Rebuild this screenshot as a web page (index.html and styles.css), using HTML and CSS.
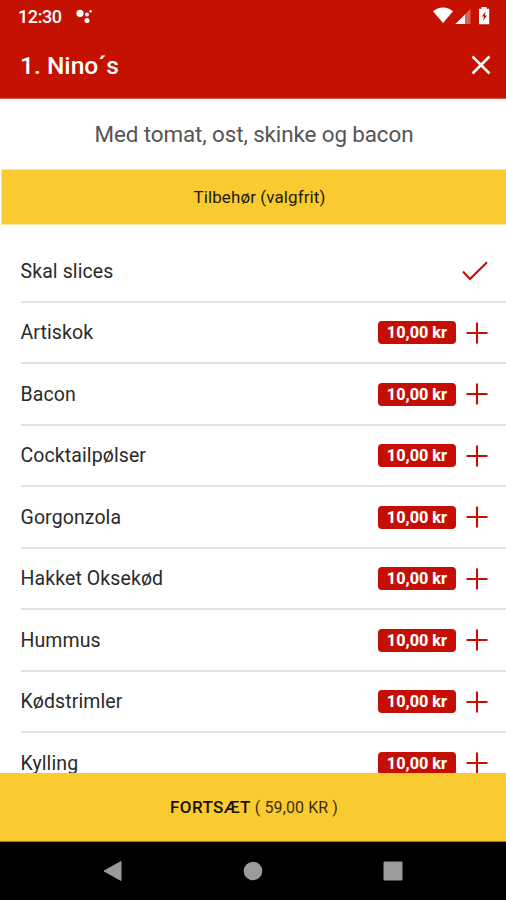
FILE: index.html
```
<!DOCTYPE html>
<html lang="da">
<head>
<meta charset="utf-8">
<title>1. Nino´s</title>
<link rel="stylesheet" href="styles.css">
</head>
<body>
<svg class="defs" aria-hidden="true">
  <symbol id="plus" viewBox="0 0 22 22"><path d="M11 .5v21M.5 11h21" fill="none" stroke="#c50f05" stroke-width="2.1"/></symbol>
</svg>
<div class="app">
  <header class="header">
    <div class="status">
      <span class="clock">12:30</span>
      <svg class="assistant" width="17" height="15" viewBox="0 0 17 15" fill="#fff"><circle cx="4" cy="4.3" r="3.6"/><circle cx="11" cy="5.6" r="2"/><circle cx="14.6" cy="2.2" r="1.2"/><circle cx="11" cy="11.5" r="2.5"/></svg>
      <svg class="system" width="58" height="18" viewBox="0 0 58 18">
        <path d="M0 4.3C5.8-.8 14.2-.8 20 4.3L10 16z" fill="#fff"/>
        <path d="M22.5 17L37.500 2v15z" fill="#fff" opacity=".35"/>
        <path d="M22.5 17L32 7.500V17z" fill="#fff"/>
        <path d="M48.5 0h5v1.800h2.700V17.300H46V1.800h2.500z" fill="#fff"/>
        <path d="M52.8 4.500l-4 5h2.300l-1 4.300 4-5.300h-2.300z" fill="#c50f05"/>
      </svg>
    </div>
    <div class="titlebar">
      <h1 class="title">1. Nino´s</h1>
      <svg width="20" height="20" viewBox="0 0 20 20"><path d="M1.5 1.500l17 17M18.500 1.500l-17 17" stroke="#fff" stroke-width="2.5" fill="none"/></svg>
    </div>
  </header>
  <p class="description"><span>Med tomat, ost, skinke og bacon</span></p>
  <h2 class="section"><span>Tilbehør (valgfrit)</span></h2>
  <main class="list">
    <div class="row"><span class="name">Skal slices</span><svg class="check" width="26" height="20" viewBox="0 0 26 20"><path d="M1 10.5l7 7.500L25 1.200" fill="none" stroke="#c50f05" stroke-width="2.1"/></svg></div>
    <div class="row"><span class="name">Artiskok</span><span class="price">10,00 kr</span><svg class="plus"><use href="#plus"/></svg></div>
    <div class="row"><span class="name">Bacon</span><span class="price">10,00 kr</span><svg class="plus"><use href="#plus"/></svg></div>
    <div class="row"><span class="name">Cocktailpølser</span><span class="price">10,00 kr</span><svg class="plus"><use href="#plus"/></svg></div>
    <div class="row"><span class="name">Gorgonzola</span><span class="price">10,00 kr</span><svg class="plus"><use href="#plus"/></svg></div>
    <div class="row"><span class="name">Hakket Oksekød</span><span class="price">10,00 kr</span><svg class="plus"><use href="#plus"/></svg></div>
    <div class="row"><span class="name">Hummus</span><span class="price">10,00 kr</span><svg class="plus"><use href="#plus"/></svg></div>
    <div class="row"><span class="name">Kødstrimler</span><span class="price">10,00 kr</span><svg class="plus"><use href="#plus"/></svg></div>
    <div class="row"><span class="name">Kylling</span><span class="price">10,00 kr</span><svg class="plus"><use href="#plus"/></svg></div>
  </main>
  <div class="continue"><b class="action">FORTSÆT</b><span class="total">( 59,00 KR )</span></div>
  <nav class="navbar">
    <svg width="19" height="22" viewBox="0 0 19 22"><path d="M1 11L18 1.500v19z" fill="#9b9b9b" stroke="#9b9b9b" stroke-linejoin="round"/></svg>
    <svg width="20" height="20" viewBox="0 0 20 20"><circle cx="10" cy="10" r="9.3" fill="#9b9b9b"/></svg>
    <svg width="20" height="20" viewBox="0 0 20 20"><rect x=".5" y=".5" width="19" height="19" rx="1.3" fill="#9b9b9b"/></svg>
  </nav>
</div>
</body>
</html>
```
FILE: styles.css
```
* { box-sizing: border-box; }
body { margin: 0; background: #fff; font-family: Roboto, "Liberation Sans", sans-serif; }
svg { display: block; flex: none; }
.defs { width: 0; height: 0; position: absolute; }
.app { height: 900px; display: flex; flex-direction: column; overflow: hidden; }
.header { height: 99px; flex: none; background: #c51100; color: #fff; border-bottom: 1px solid #d45a50; }
.status { height: 32px; display: flex; align-items: center; padding: 0 15px 0 18px; }
.clock { font-size: 18px; font-weight: 500; letter-spacing: -.4px; }
.assistant { margin-left: 14px; }
.system { margin-left: auto; margin-top: -1px; }
.titlebar { height: 66px; display: flex; align-items: center; justify-content: space-between; padding: 0 15px 0 20px; }
.title { margin: 0; font-size: 24.6px; font-weight: 500; }
.description { margin: 0; height: 70px; flex: none; border-top: 3px solid #f3f8fa; display: flex; align-items: center; justify-content: center; padding: 0 0 4px 2px; font-size: 22.4px; font-weight: 400; letter-spacing: -.1px; color: #555; }
.section { margin: 0 0 0 1px; height: 56px; flex: none; background: #facb31; border: 1px solid #fae39b; border-right: 0; display: flex; align-items: center; justify-content: center; padding-left: 11px; font-size: 17px; font-weight: 400; letter-spacing: .1px; color: #211b06; }
.list { flex: 1; min-height: 0; overflow: hidden; padding: 16.4px 0 0 20.500px; }
.row { height: 61.5px; display: flex; align-items: center; border-bottom: 2px solid #e2e2e2; padding-right: 18px; }
.name { flex: 1; font-size: 19.5px; letter-spacing: .1px; color: #2a2a2a; }
.price { width: 78px; height: 23px; border-radius: 4px; background: #c50f05; color: #fff; text-align: center; font-size: 16.2px; line-height: 23px; font-weight: 800; }
.plus { width: 22px; height: 22px; margin-left: 10px; }
.continue { height: 69px; flex: none; background: #facb31; border-bottom: 1px solid #9c801f; display: flex; align-items: center; justify-content: center; gap: 4px; padding-left: 2px; color: #171303; }
.action { font-size: 17px; font-weight: 500; letter-spacing: .4px; }
.total { font-size: 16px; letter-spacing: .1px; color: #3a300c; }
.navbar { height: 58px; flex: none; background: #000; display: flex; align-items: center; justify-content: space-between; padding: 0 103px; }
```
